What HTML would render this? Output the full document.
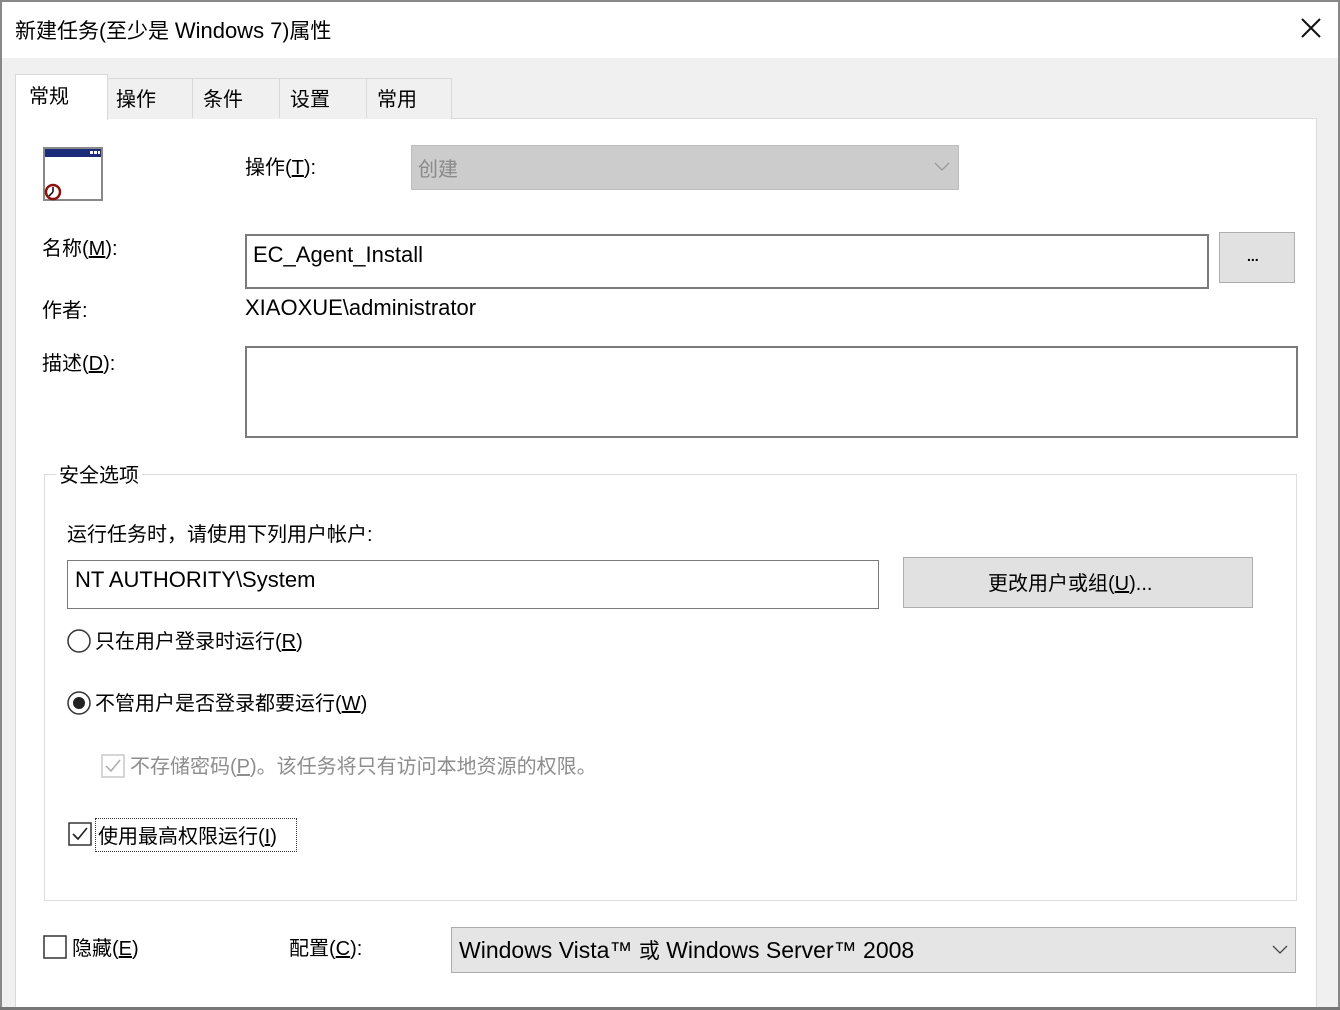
<!DOCTYPE html>
<html><head><meta charset="utf-8"><style>
*{box-sizing:border-box;margin:0;padding:0}
body{width:1340px;height:1010px;overflow:hidden;background:#fff;font-family:"Liberation Sans","Noto Sans CJK SC",sans-serif;font-size:20px;color:#000;position:relative}
.a{position:absolute;white-space:nowrap}
u{text-decoration:underline}
.l{font-size:22px}
</style></head><body>
<div class="a" style="left:0;top:0;width:1340px;height:1010px;border:2px solid #888;border-bottom:none;"></div>
<div class="a" style="left:2px;top:58px;width:1336px;height:952px;background:#f0f0f0"></div>
<div class="a" style="left:15px;top:15px;font-size:21px">新建任务(至少是 <span style="font-size:22px">Windows 7</span>)属性</div>
<svg class="a" style="left:1300px;top:17px" width="22" height="22"><path d="M2 2L20 20M20 2L2 20" stroke="#111" stroke-width="2"/></svg>
<div class="a" style="left:15px;top:118px;width:1302px;height:892px;background:#fff;border:1px solid #dadada"></div>
<div class="a" style="left:107px;top:78px;width:345px;height:41px;background:#f0f0f0;border:1px solid #d9d9d9;border-bottom:none"></div>
<div class="a" style="left:192px;top:78px;width:1px;height:40px;background:#d9d9d9"></div>
<div class="a" style="left:279px;top:78px;width:1px;height:40px;background:#d9d9d9"></div>
<div class="a" style="left:366px;top:78px;width:1px;height:40px;background:#d9d9d9"></div>
<div class="a" style="left:15px;top:74px;width:93px;height:46px;background:#fff;border:1px solid #d9d9d9;border-bottom:none"></div>
<div class="a" style="left:29px;top:80px">常规</div>
<div class="a" style="left:116px;top:83px">操作</div>
<div class="a" style="left:203px;top:83px">条件</div>
<div class="a" style="left:290px;top:83px">设置</div>
<div class="a" style="left:377px;top:83px">常用</div>
<svg class="a" style="left:42px;top:146px" width="62" height="58">
<rect x="2" y="2" width="58" height="52" fill="#fff" stroke="#888" stroke-width="2"/>
<rect x="3" y="3" width="56" height="8" fill="#1c2a7a"/>
<rect x="48" y="5" width="3" height="3" fill="#fff"/><rect x="52" y="5" width="3" height="3" fill="#fff"/><rect x="56" y="5" width="2" height="3" fill="#fff"/>
<circle cx="11" cy="46" r="7" fill="#fff" stroke="#8b1010" stroke-width="2.5"/>
<path d="M11 46L7 50M11 46L11 41" stroke="#000" stroke-width="1.5"/>
</svg>
<div class="a" style="left:245px;top:151px">操作(<u>T</u>):</div>
<div class="a" style="left:411px;top:145px;width:548px;height:45px;background:#ccc;border:1px solid #bdbdbd"></div>
<div class="a" style="left:418px;top:153px;color:#8a8a8a">创建</div>
<svg class="a" style="left:934px;top:162px" width="16" height="10"><path d="M1 1L8 8L15 1" stroke="#999" fill="none" stroke-width="1.3"/></svg>
<div class="a" style="left:42px;top:232px">名称(<u>M</u>):</div>
<div class="a" style="left:245px;top:234px;width:964px;height:55px;border:2px solid #7a7a7a;background:#fff"></div>
<div class="a l" style="left:253px;top:242px">EC_Agent_Install</div>
<div class="a" style="left:1219px;top:232px;width:76px;height:51px;background:#e1e1e1;border:1px solid #adadad"></div>
<div class="a" style="left:1247px;top:248px;font-size:14px;font-weight:bold">...</div>
<div class="a" style="left:42px;top:294px">作者:</div>
<div class="a l" style="left:245px;top:295px">XIAOXUE\administrator</div>
<div class="a" style="left:42px;top:347px">描述(<u>D</u>):</div>
<div class="a" style="left:245px;top:346px;width:1053px;height:92px;border:2px solid #7a7a7a;background:#fff"></div>
<div class="a" style="left:44px;top:474px;width:1253px;height:427px;border:1px solid #dcdcdc"></div>
<div class="a" style="left:56px;top:459px;background:#fff;padding:0 3px">安全选项</div>
<div class="a" style="left:67px;top:518px">运行任务时，请使用下列用户帐户:</div>
<div class="a" style="left:67px;top:560px;width:812px;height:49px;border:1px solid #7a7a7a"></div>
<div class="a l" style="left:75px;top:567px">NT AUTHORITY\System</div>
<div class="a" style="left:903px;top:557px;width:350px;height:51px;background:#e1e1e1;border:1px solid #adadad"></div>
<div class="a" style="left:988px;top:567px">更改用户或组(<u>U</u>)...</div>
<svg class="a" style="left:66px;top:628px" width="26" height="26"><circle cx="13" cy="13" r="11" fill="#fff" stroke="#333" stroke-width="1.5"/></svg>
<div class="a" style="left:95px;top:625px">只在用户登录时运行(<u>R</u>)</div>
<svg class="a" style="left:66px;top:690px" width="26" height="26"><circle cx="13" cy="13" r="11" fill="#fff" stroke="#333" stroke-width="1.5"/><circle cx="13" cy="13" r="6" fill="#222"/></svg>
<div class="a" style="left:95px;top:687px">不管用户是否登录都要运行(<u>W</u>)</div>
<svg class="a" style="left:100px;top:753px" width="26" height="26"><rect x="2" y="2" width="22" height="22" fill="#fff" stroke="#c8c8c8" stroke-width="1.5"/><path d="M6 13L11 18L20 7" stroke="#aaa" fill="none" stroke-width="1.5"/></svg>
<div class="a" style="left:130px;top:750px;color:#8d8d8d">不存储密码(<u>P</u>)。该任务将只有访问本地资源的权限。</div>
<svg class="a" style="left:67px;top:821px" width="26" height="26"><rect x="2" y="2" width="22" height="22" fill="#fff" stroke="#333" stroke-width="1.5"/><path d="M6 13L11 18L20 7" stroke="#222" fill="none" stroke-width="1.6"/></svg>
<div class="a" style="left:95px;top:818px;height:34px;width:202px;border:1px dotted #333"></div>
<div class="a" style="left:98px;top:820px">使用最高权限运行(<u>I</u>)</div>
<svg class="a" style="left:43px;top:934px" width="26" height="26"><rect x="1" y="2" width="22" height="22" fill="#fff" stroke="#333" stroke-width="1.5"/></svg>
<div class="a" style="left:72px;top:932px">隐藏(<u>E</u>)</div>
<div class="a" style="left:289px;top:932px">配置(<u>C</u>):</div>
<div class="a" style="left:451px;top:927px;width:845px;height:46px;background:#e5e5e5;border:1px solid #adadad"></div>
<div class="a" style="left:459px;top:935px;font-size:23px">Windows Vista™ <span style="font-size:21px">或</span> Windows Server™ 2008</div>
<svg class="a" style="left:1272px;top:945px" width="16" height="10"><path d="M1 1L8 8L15 1" stroke="#444" fill="none" stroke-width="1.3"/></svg>
<div class="a" style="left:0;top:1007px;width:1340px;height:3px;background:#777"></div>
</body></html>
